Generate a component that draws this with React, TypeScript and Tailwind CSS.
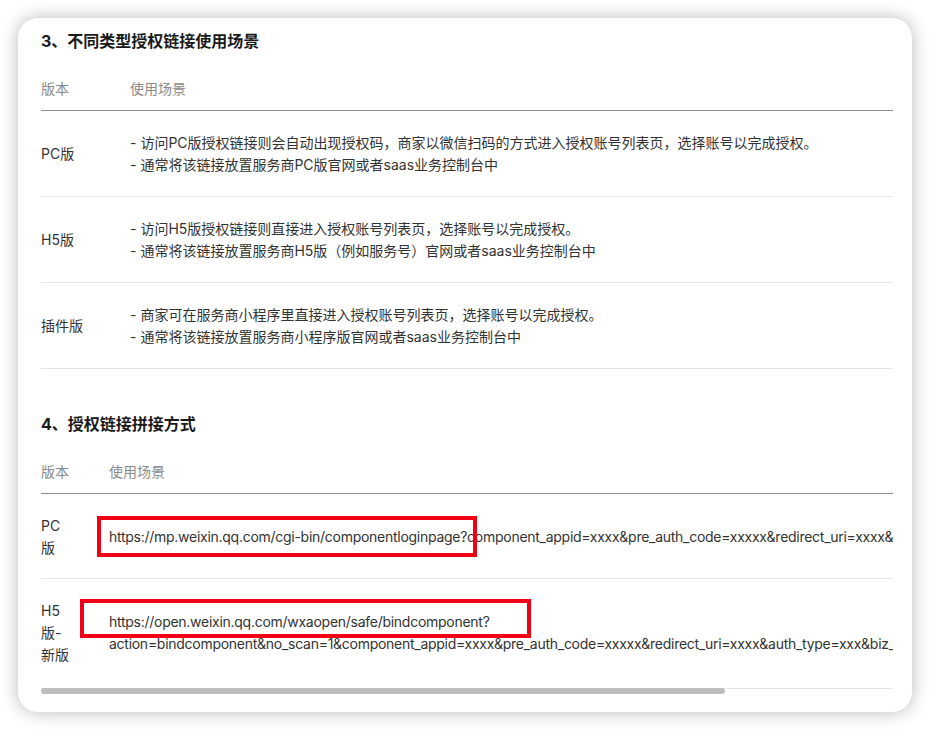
const scenes = [
  {
    name: "PC版",
    lines: [
      "- 访问PC版授权链接则会自动出现授权码，商家以微信扫码的方式进入授权账号列表页，选择账号以完成授权。",
      "- 通常将该链接放置服务商PC版官网或者saas业务控制台中",
    ],
  },
  {
    name: "H5版",
    lines: [
      "- 访问H5版授权链接则直接进入授权账号列表页，选择账号以完成授权。",
      "- 通常将该链接放置服务商H5版（例如服务号）官网或者saas业务控制台中",
    ],
  },
  {
    name: "插件版",
    lines: [
      "- 商家可在服务商小程序里直接进入授权账号列表页，选择账号以完成授权。",
      "- 通常将该链接放置服务商小程序版官网或者saas业务控制台中",
    ],
  },
];

function Heading({ children }: { children: React.ReactNode }) {
  return (
    <h2 className="mb-4 text-[16px] font-bold leading-[22px] text-[#1a1a1a]">
      {children}
    </h2>
  );
}

function SceneTable() {
  return (
    <table className="w-full border-collapse text-left text-[14px]">
      <thead>
        <tr className="border-b border-[#8c8c8c]">
          <th className="w-[89px] py-[10px] font-normal leading-[22px] text-[#8a8a8a]">
            版本
          </th>
          <th className="py-[10px] font-normal leading-[22px] text-[#8a8a8a]">
            使用场景
          </th>
        </tr>
      </thead>
      <tbody>
        {scenes.map((s) => (
          <tr key={s.name} className="border-b border-[#e6e6e6]">
            <td className="pt-[21px] pb-5 align-middle leading-[22px] text-[#333]">
              {s.name}
            </td>
            <td className="pt-[21px] pb-5 leading-[22px] text-[#333]">
              {s.lines.map((l) => (
                <div key={l}>{l}</div>
              ))}
            </td>
          </tr>
        ))}
      </tbody>
    </table>
  );
}

function LinkTable() {
  return (
    <div className="w-full">
      <div className="w-full overflow-hidden">
        <table className="w-max border-collapse text-left text-[14px]">
          <thead>
            <tr className="border-b border-[#8c8c8c]">
              <th className="w-[68px] py-[10px] font-normal leading-[22px] text-[#8a8a8a]">
                版本
              </th>
              <th className="py-[10px] font-normal leading-[22px] text-[#8a8a8a]">
                使用场景
              </th>
            </tr>
          </thead>
          <tbody>
            <tr className="border-b border-[#e6e6e6]">
              <td className="pt-[21px] pb-[19px] align-middle leading-[22px] text-[#333]">
                <div className="w-[30px]">PC版</div>
              </td>
              <td className="pt-[21px] pb-[19px] align-middle leading-[22px] tracking-[-0.27px] whitespace-nowrap text-[#333]">
                <span className="relative">
                  https://mp.weixin.qq.com/cgi-bin/componentloginpage?
                  <span className="pointer-events-none absolute -top-[12px] -bottom-[12px] -left-[12px] -right-[10px] border-[4px] border-[#f00014]" />
                </span>
                component_appid=xxxx&amp;pre_auth_code=xxxxx&amp;redirect_uri=xxxx&amp;auth_type=xxx
              </td>
            </tr>
            <tr className="border-b border-[#e6e6e6]">
              <td className="pt-[21px] pb-[22px] align-middle leading-[22px] text-[#333]">
                <div className="w-[30px]">H5版-新版</div>
              </td>
              <td className="pt-[21px] pb-[22px] align-middle leading-[22px] tracking-[-0.27px] whitespace-nowrap text-[#333]">
                <div>
                  <span className="relative">
                    https://open.weixin.qq.com/wxaopen/safe/bindcomponent?
                    <span className="pointer-events-none absolute -top-[14px] -bottom-[8px] -left-[29px] -right-[41px] border-[4px] border-[#f00014]" />
                  </span>
                </div>
                <div>
                  action=bindcomponent&amp;no_scan=1&amp;component_appid=xxxx&amp;pre_auth_code=xxxxx&amp;redirect_uri=xxxx&amp;auth_type=xxx&amp;biz_appid=xxxx
                </div>
              </td>
            </tr>
          </tbody>
        </table>
      </div>
      <div className="-mt-px h-[6px] w-full">
        <div className="h-full w-[684px] rounded-full bg-[#bdbdbd]" />
      </div>
    </div>
  );
}

export default function App() {
  return (
    <div className="min-h-[730px] w-[930px] bg-white p-[18px] font-['Inter','Noto_Sans_CJK_SC',sans-serif]">
      <div className="h-[694px] overflow-hidden rounded-[20px] bg-white pl-[23px] pr-[19px] pt-[12px] shadow-[0_0_18px_rgba(0,0,0,0.28)]">
        <Heading>3、不同类型授权链接使用场景</Heading>
        <SceneTable />
        <div className="h-[44px]" />
        <Heading>4、授权链接拼接方式</Heading>
        <LinkTable />
      </div>
    </div>
  );
}
